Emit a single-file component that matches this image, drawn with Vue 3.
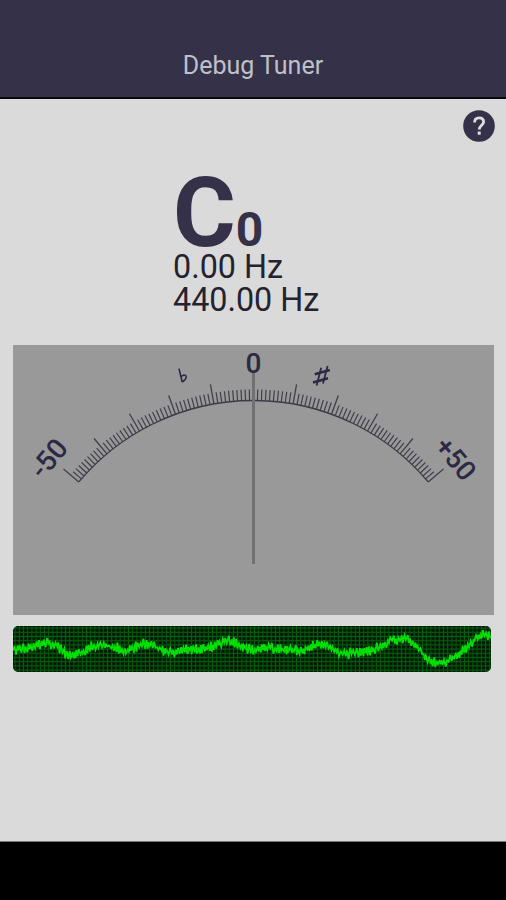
<template>
  <div class="screen">
    <header class="app-bar">
      <span class="title">Debug Tuner</span>
    </header>

    <main class="content">
      <button class="help" title="Help">
        <svg width="32" height="32" viewBox="0 0 32 32">
          <circle cx="16" cy="16" r="15.8" fill="#343148" />
          <path
            d="M11.6 12.4c0-2.8 1.8-4.6 4.5-4.6s4.5 1.6 4.5 4.1c0 3.1-4.4 3.7-4.4 7.6"
            fill="none"
            stroke="#dedee0"
            stroke-width="2.8"
          />
          <rect x="14.7" y="21.6" width="3" height="3.2" rx="0.6" fill="#dedee0" />
        </svg>
      </button>

      <section class="reading">
        <div class="note">
          <span class="name">{{ note }}</span>
          <span class="octave">{{ octave }}</span>
        </div>
        <div class="freq">{{ frequency.toFixed(2) }} Hz</div>
        <div class="freq">{{ reference.toFixed(2) }} Hz</div>
      </section>

      <svg class="dial" width="481" height="270" viewBox="0 0 481 270">
        <path class="arc" :d="arcPath" />
        <line
          v-for="t in ticks"
          :key="t.cents"
          :class="['tick', { major: t.major }]"
          :x1="t.x1"
          :y1="t.y1"
          :x2="t.x2"
          :y2="t.y2"
        />
        <line class="needle" :x1="CX" y1="27" :x2="CX" y2="219" />
        <text
          v-for="l in labels"
          :key="l.text"
          class="label"
          :x="CX"
          :y="CY - l.radius"
          :font-size="l.size"
          :transform="`rotate(${l.angle} ${CX} ${CY})`"
        >{{ l.text }}</text>
        <g class="accidental">
          <path d="M166 23.6L169.2 37M167.8 32.4c1.6-2.6 4.6-3.2 5.3-1.2c.6 2-1.4 4-3.9 5.8" stroke-width="1.6" />
        </g>
        <g class="accidental">
          <path d="M303.6 40.4L308.2 22.8M310 38.6L314.6 21" stroke-width="1.8" />
          <path d="M301.8 29.2L316.8 25M300 37.4L315 33.2" stroke-width="2.6" />
        </g>
      </svg>

      <svg class="scope" width="478" height="46" viewBox="0 0 478 46">
        <defs>
          <pattern id="grid" width="4.2" height="4.2" patternUnits="userSpaceOnUse">
            <rect width="4.2" height="4.2" fill="#001200" />
            <path d="M2.1 0V4.2M0 2.1H4.2" stroke="#005f0c" stroke-width="1.1" />
          </pattern>
        </defs>
        <rect width="478" height="46" fill="url(#grid)" />
        <polyline class="wave" :points="wavePoints" />
      </svg>
    </main>

    <footer class="nav-bar"></footer>
  </div>
</template>

<script setup>
import { ref, computed } from 'vue'

const note = ref('C')
const octave = ref(0)
const frequency = ref(0)
const reference = ref(440)

// Dial geometry: one degree per cent, from -50 to +50
const CX = 240.5
const CY = 283.5
const R = 228

function polar(angle, radius) {
  const a = (angle * Math.PI) / 180
  return { x: CX + radius * Math.sin(a), y: CY - radius * Math.cos(a) }
}

const ticks = []
for (let cents = -50; cents <= 50; cents++) {
  const major = cents % 10 === 0
  const p = polar(cents, R)
  const q = polar(cents, major ? R + 20 : R + 11)
  ticks.push({ cents, major, x1: p.x, y1: p.y, x2: q.x, y2: q.y })
}

const start = polar(-50, R)
const end = polar(50, R)
const arcPath = `M${start.x} ${start.y}A${R} ${R} 0 0 1 ${end.x} ${end.y}`

const labels = [
  { text: '-50', angle: -50.3, radius: 256.5, size: 28 },
  { text: '0', angle: 0, radius: 255.5, size: 28 },
  { text: '+50', angle: 50, radius: 254.5, size: 27.5 }
]

// Slow movement of the signal, noise is added on top
const signal = [
  [0, 24], [14, 22], [32, 17], [42, 18], [52, 27], [59, 30], [70, 26],
  [80, 20], [99, 20], [110, 24], [117, 24], [130, 17], [139, 20], [152, 25],
  [164, 27], [177, 23], [194, 23], [204, 17], [214, 14], [227, 19], [237, 24],
  [257, 22], [274, 24], [290, 25], [300, 20], [312, 18], [322, 24], [334, 28],
  [342, 26], [357, 24], [365, 22], [379, 14], [394, 12], [402, 18], [412, 31],
  [422, 37], [435, 35], [449, 25], [462, 13], [469, 9], [478, 8]
]

const wavePoints = computed(() => {
  const points = []
  let seed = 4711
  let k = 0
  let side = 1
  const random = () => {
    seed = (seed * 16807) % 2147483647
    return seed / 2147483647
  }
  for (let x = 0; x <= 478; x += 0.8 + random() * 1.1) {
    while (k < signal.length - 2 && signal[k + 1][0] < x) k++
    const [x0, y0] = signal[k]
    const [x1, y1] = signal[k + 1]
    const base = y0 + ((y1 - y0) * (x - x0)) / (x1 - x0)
    const size = 0.4 + 5.2 * random()
    points.push(`${x.toFixed(1)},${(base + side * size).toFixed(1)}`)
    side = -side
  }
  return points.join(' ')
})
</script>

<style>
html, body {
  margin: 0;
  padding: 0;
}
</style>

<style scoped>
.screen {
  display: flex;
  flex-direction: column;
  height: 900px;
  background: #dadada;
  color: #343148;
  font-family: Roboto, sans-serif;
}

.app-bar {
  box-sizing: border-box;
  height: 99px;
  padding-top: 35px;
  display: flex;
  align-items: center;
  justify-content: center;
  background: #343148;
  border-bottom: 2px solid #08080c;
}

.title {
  color: #c0c0c8;
  font-size: 25px;
  line-height: 30px;
}

.content {
  flex: 1;
  display: flex;
  flex-direction: column;
  padding: 11px 11px 0 13px;
}

.help {
  align-self: flex-end;
  display: block;
  width: 32px;
  height: 32px;
  padding: 0;
  border: none;
  background: none;
  cursor: pointer;
}

.help svg {
  display: block;
}

.reading {
  height: 170px;
  margin: 33px 0 0 160px;
}

.note {
  display: flex;
  align-items: baseline;
  height: 76px;
  line-height: 76px;
  font-weight: 700;
}

.name {
  font-size: 96px;
}

.octave {
  font-size: 48px;
}

.freq {
  color: #24222f;
  font-size: 32.3px;
  line-height: 33px;
}

.dial {
  display: block;
  flex: none;
  background: #999999;
}

.needle {
  stroke: #717171;
  stroke-width: 3;
}

.arc {
  fill: none;
  stroke: #3c3a4a;
  stroke-width: 1.3;
}

.tick {
  stroke: #403e4a;
  stroke-width: 1.2;
}

.tick.major {
  stroke-width: 1.3;
}

.label {
  fill: #2c2945;
  font-weight: 500;
  text-anchor: middle;
}

.accidental {
  fill: none;
  stroke: #2c2945;
}

.scope {
  display: block;
  flex: none;
  margin-top: 11px;
  border-radius: 5px;
}

.wave {
  fill: none;
  stroke: #00e000;
  stroke-width: 1.8;
}

.nav-bar {
  box-sizing: border-box;
  height: 59px;
  background: #000;
  border-top: 1px solid #777;
}
</style>
